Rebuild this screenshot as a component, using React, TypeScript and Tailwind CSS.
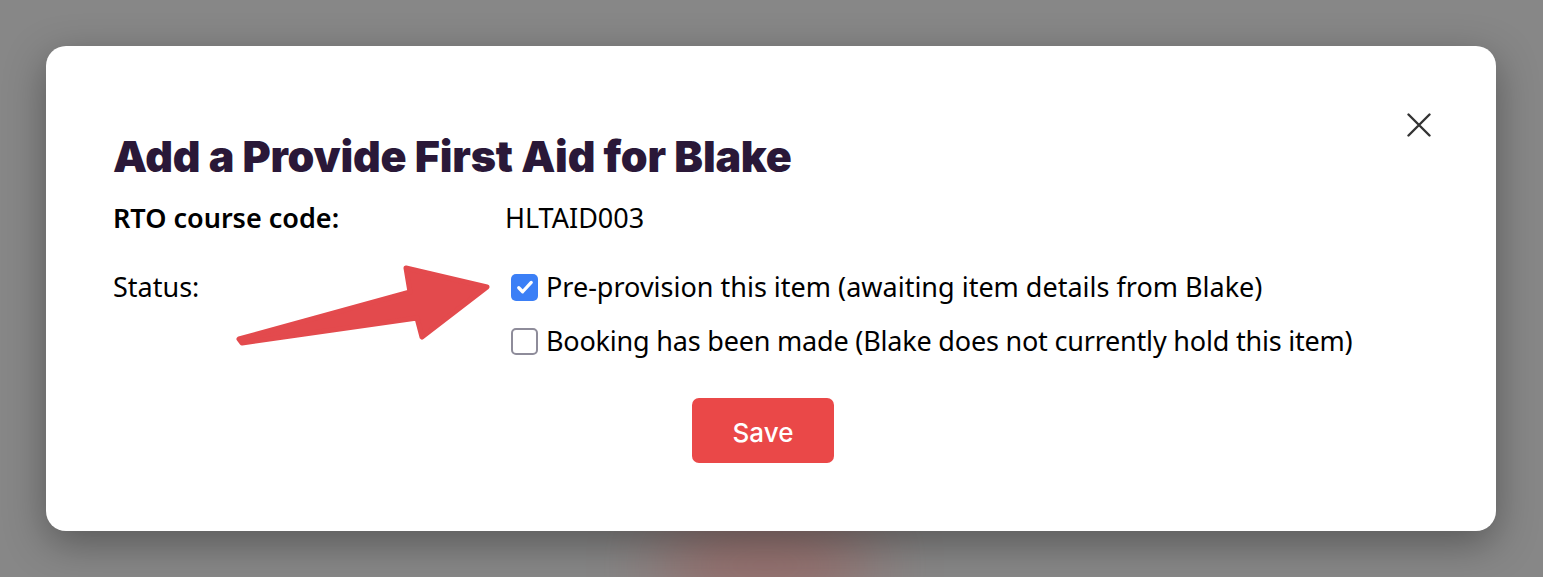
import React from "react";

const body = { fontFamily: '"Noto Sans", "Open Sans", sans-serif' };

const Checkbox = ({ checked }: { checked: boolean }) =>
  checked ? (
    <span className="flex h-[27px] w-[27px] shrink-0 items-center justify-center rounded-[5px] bg-[#3b7ff6]">
      <svg width="20" height="20" viewBox="0 0 16 16" fill="none">
        <path d="M3 8.6l3.1 3.2L13 4.3" stroke="white" strokeWidth="2.6" strokeLinecap="round" strokeLinejoin="round" />
      </svg>
    </span>
  ) : (
    <span className="h-[27px] w-[27px] shrink-0 rounded-[5px] border-2 border-[#8e8c9a] bg-white" />
  );

const App = () => {
  return (
    <div className="relative h-[577px] w-full overflow-hidden bg-[#878787] pt-[46px]" style={body}>
      <div className="absolute left-[660px] top-[520px] h-[90px] w-[210px] rounded-full bg-[#b0403a] opacity-40 blur-2xl" />

      <div className="relative ml-[46px] h-[485px] w-[1450px] rounded-[20px] bg-white pl-[67px] pr-[83px] pt-[85px] shadow-[0_12px_40px_rgba(0,0,0,0.35)]">
        <button className="absolute right-[61px] top-[63px] p-1">
          <svg width="24" height="24" viewBox="0 0 24 24" fill="none">
            <path d="M1.5 1.5l21 21M22.5 1.5l-21 21" stroke="#333" strokeWidth="2.4" strokeLinecap="round" />
          </svg>
        </button>

        <h1
          className="text-[43px] font-black leading-[50px] tracking-[-0.2px] text-[#2a1838]"
          style={{ fontFamily: 'Inter, "Noto Sans", sans-serif' }}
        >
          Add a Provide First Aid for Blake
        </h1>

        <div className="mt-[21px] grid grid-cols-[392px_1fr] text-[27px] leading-[32px] text-black">
          <div className="font-semibold">RTO course code:</div>
          <div>HLTAID003</div>

          <div className="mt-[37px]">Status:</div>
          <div className="mt-[37px] flex flex-col gap-[22px] pl-[6px]">
            <label className="flex items-center gap-[8px]">
              <Checkbox checked />
              <span>Pre-provision this item (awaiting item details from Blake)</span>
            </label>
            <label className="flex items-center gap-[8px]">
              <Checkbox checked={false} />
              <span className="tracking-[-0.2px]">Booking has been made (Blake does not currently hold this item)</span>
            </label>
          </div>
        </div>

        <div className="mt-[41px] flex justify-center">
          <button
            className="h-[65px] w-[142px] rounded-[7px] bg-[#ea4848] pt-[3px] text-[26px] font-medium text-white"
            style={{ fontFamily: 'Inter, "Liberation Sans", sans-serif' }}
          >
            Save
          </button>
        </div>
      </div>

      <svg className="pointer-events-none absolute left-0 top-0" width="1543" height="577" viewBox="0 0 1543 577">
        <polygon
          points="239,339 410,292 406,268 487,287 422,337 417,318 242,343"
          fill="#e34a4d"
          stroke="#e34a4d"
          strokeWidth="5"
          strokeLinejoin="round"
        />
      </svg>
    </div>
  );
};

export default App;
